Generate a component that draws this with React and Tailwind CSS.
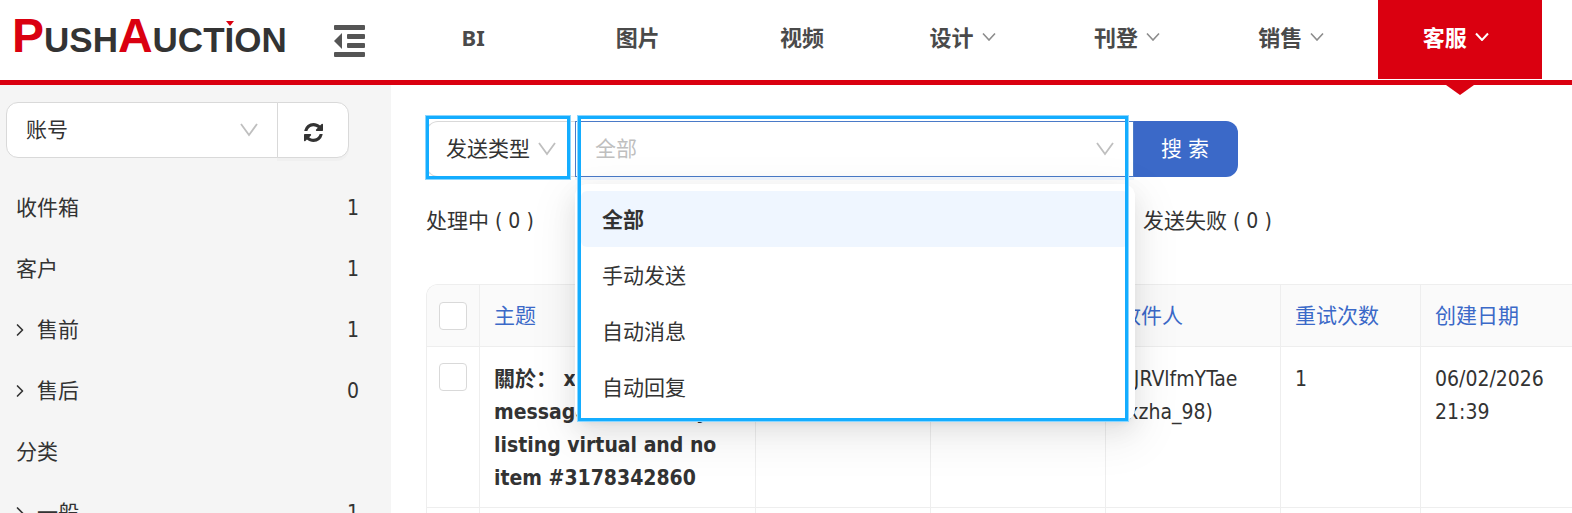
import React, { useState } from 'react';
import { ChevronRight } from 'lucide-react';

const navItems = [
  { label: 'BI' },
  { label: '图片' },
  { label: '视频' },
  { label: '设计', menu: true },
  { label: '刊登', menu: true },
  { label: '销售', menu: true },
  { label: '客服', menu: true, active: true },
];

const folders = [
  { label: '收件箱', count: 1 },
  { label: '客户', count: 1 },
  { label: '售前', count: 1, expandable: true },
  { label: '售后', count: 0, expandable: true },
  { label: '分类' },
  { label: '一般', count: 1, expandable: true },
];

const sendTypes = ['全部', '手动发送', '自动消息', '自动回复'];

const Caret = ({ className }) => (
  <svg viewBox="0 0 18 14" className={className} fill="none" stroke="currentColor" strokeWidth="1.8" aria-hidden="true">
    <path d="M1 1 L9 12 L17 1" />
  </svg>
);

const RefreshIcon = () => (
  <svg viewBox="0 0 1536 1536" className="mt-1 h-[19px] w-[19px]" fill="currentColor" aria-hidden="true">
    <path d="M1511 928q0 5 -1 7q-64 268 -268 434.5t-478 166.5q-146 0 -282.5 -55t-243.5 -157l-129 129q-19 19 -45 19t-45 -19t-19 -45v-448q0 -26 19 -45t45 -19h448q26 0 45 19t19 45t-19 45l-137 137q71 66 161 102t187 36q134 0 250 -65t186 -179q11 -17 53 -117q8 -23 30 -23h192q13 0 22.5 9.5t9.5 22.5zM1536 128v448q0 26 -19 45t-45 19h-448q-26 0 -45 -19t-19 -45t19 -45l138 -138q-148 -137 -349 -137q-134 0 -250 65t-186 179q-11 17 -53 117q-8 23 -30 23h-199q-13 0 -22.5 -9.5t-9.5 -22.5v-7q65 -268 270 -434.5t480 -166.5q146 0 284 55.5t245 156.5l130 -129q19 -19 45 -19t45 19t19 45z" />
  </svg>
);

const Logo = () => (
  <a href="#" className="flex items-baseline font-['Liberation_Sans',sans-serif] font-bold text-[35px] leading-[72px] text-[#333]">
    <span className="text-[48px] text-[#da0010]">P</span>
    USH
    <span className="text-[48px] text-[#da0010]">A</span>
    UCT
    <span className="relative">
      I
      <svg viewBox="0 0 8 5" className="absolute left-px top-[17px] w-2 h-[5px]" aria-hidden="true">
        <path d="M0 0 H8 L4 5 Z" fill="#da0010" />
      </svg>
    </span>
    ON
  </a>
);

const Header = () => (
  <header className="flex h-[85px] border-b-5 border-[#da0010] bg-white">
    <div className="flex w-[391px] shrink-0 items-start pl-3">
      <div className="w-[322px]">
        <Logo />
      </div>
      <button aria-label="收起菜单" className="mt-[25px]">
        <svg viewBox="0 0 31 32" className="h-8 w-[31px]" fill="#555">
          <rect width="31" height="5" rx="1" />
          <rect x="13" y="9" width="18" height="5" rx="1" />
          <rect x="13" y="18" width="18" height="5" rx="1" />
          <rect y="27" width="31" height="5" rx="1" />
          <path d="M0 16 L8 8 V24 Z" />
        </svg>
      </button>
    </div>
    <nav className="mr-[30px] grid flex-1 grid-cols-7 font-['Noto_Sans','Noto_Sans_CJK_SC',sans-serif] text-[22px] font-bold text-[#4a4a4a]">
      {navItems.map((item) => (
        <a
          key={item.label}
          href="#"
          className={`relative flex h-[79px] items-center justify-center gap-2 pb-1.5 ${item.active ? 'bg-[#da0010] text-white' : ''}`}
        >
          {item.label}
          {item.menu && (
            <svg
              viewBox="0 0 14 9"
              className={`mr-2 h-[9px] w-3.5 ${item.active ? 'text-white' : 'text-[#8c8c8c]'}`}
              fill="none"
              stroke="currentColor"
              strokeWidth={item.active ? 2 : 1.6}
              aria-hidden="true"
            >
              <path d="M1 1.5 L7 8 L13 1.5" />
            </svg>
          )}
          {item.active && (
            <svg viewBox="0 0 28 10" className="absolute -bottom-4 left-1/2 h-2.5 w-7 -translate-x-1/2" aria-hidden="true">
              <path d="M0 0 H28 L14 10 Z" fill="#da0010" />
            </svg>
          )}
        </a>
      ))}
    </nav>
  </header>
);

const Sidebar = () => (
  <aside className="w-[391px] shrink-0 bg-[#f5f5f5] pl-1.5 pt-[17px]">
    <div className="mr-[42px] flex h-14">
      <div className="relative flex-1">
        <select aria-label="账号" className="h-full w-full appearance-none rounded-l-xl border border-[#d9d9d9] bg-white pl-[19px]">
          <option>账号</option>
        </select>
        <Caret className="pointer-events-none absolute right-5 top-[21px] h-3.5 w-[18px] text-[#bfbfbf]" />
      </div>
      <button
        aria-label="刷新"
        className="-ml-px flex w-[72px] items-center justify-center rounded-r-xl border border-[#d9d9d9] bg-white shadow-[0_3px_0_rgba(0,0,0,0.02)]"
      >
        <RefreshIcon />
      </button>
    </div>
    <ul className="mr-8 mt-[19px] pl-2.5">
      {folders.map((folder) => (
        <li key={folder.label}>
          <a href="#" className="flex h-[61px] items-center">
            {folder.expandable && <ChevronRight className="-ml-1.5 mr-[7px] h-5 w-5" strokeWidth={2} />}
            <span className="flex-1">{folder.label}</span>
            <span>{folder.count}</span>
          </a>
        </li>
      ))}
    </ul>
  </aside>
);

const SearchBar = () => {
  const [selected, setSelected] = useState('全部');

  return (
    <div className="relative flex h-14">
      <div className="relative w-[149px]">
        <select aria-label="搜索条件" className="h-full w-full appearance-none rounded-l-xl border border-r-0 border-[#d9d9d9] bg-white pl-[19px]">
          <option>发送类型</option>
        </select>
        <Caret className="pointer-events-none absolute right-[19px] top-[21px] h-3.5 w-[18px] text-[#bfbfbf]" />
      </div>

      <div className="relative w-[559px]">
        <input
          type="text"
          role="combobox"
          aria-label="发送类型"
          aria-expanded="true"
          aria-controls="send-types"
          placeholder="全部"
          readOnly
          className="h-full w-full border border-[#4a7ac8] bg-white pl-[19px] placeholder-[#bfbfbf] shadow-[0_3px_0_rgba(5,95,255,0.06)] outline-none"
        />
        <Caret className="absolute right-5 top-[21px] h-3.5 w-[18px] text-[#bfbfbf]" />
        <ul
          id="send-types"
          role="listbox"
          className="absolute left-0 top-[63px] z-10 w-[560px] rounded-xl bg-white px-1.5 pb-1.5 pt-[7px] shadow-[0_9px_24px_0_rgba(0,0,0,0.08),0_5px_9px_-6px_rgba(0,0,0,0.12),0_14px_42px_12px_rgba(0,0,0,0.05)]"
        >
          {sendTypes.map((type) => (
            <li
              key={type}
              role="option"
              aria-selected={type === selected}
              onClick={() => setSelected(type)}
              className={`flex h-14 items-center rounded-md pl-[21px] pt-0.5 ${type === selected ? 'bg-[#eff6ff] font-bold' : ''}`}
            >
              {type}
            </li>
          ))}
        </ul>
        <div className="pointer-events-none absolute -top-[5px] left-[3px] z-20 h-[305px] w-[550px] border-3 border-[#14adff] shadow-[0_0_0_1px_#8ad6ff]" />
      </div>

      <button className="w-[104px] rounded-r-xl bg-[#3b69c8] pr-0.5 text-white">搜 索</button>
      <div className="pointer-events-none absolute left-0 -top-[5px] z-20 h-[63px] w-[144px] border-3 border-[#14adff] shadow-[0_0_0_1px_#8ad6ff]" />
    </div>
  );
};

const MessageTable = () => (
  <div className="overflow-hidden rounded-tl-xl border-l border-t border-[#eee]">
    <table className="w-full table-fixed border-separate border-spacing-0 text-left [&_td]:border-b [&_td]:border-r [&_td]:border-[#eee] [&_td]:px-3.5 [&_td]:pb-3 [&_td]:pt-4 [&_th]:border-b [&_th]:border-r [&_th]:border-[#eee] [&_th]:px-3.5 [&_th]:font-normal [&_tr>*:last-child]:border-r-0">
      <colgroup>
        <col className="w-[53px]" />
        <col className="w-[276px]" />
        <col className="w-[175px]" />
        <col className="w-[175px]" />
        <col className="w-[175px]" />
        <col className="w-[140px]" />
        <col />
      </colgroup>
      <thead className="h-[62px] bg-[#fafafa] text-[#3b69c8]">
        <tr>
          <th className="px-3!">
            <input type="checkbox" aria-label="全选" className="block h-7 w-7 appearance-none rounded-sm border border-[#d9d9d9] bg-white" />
          </th>
          <th>主题</th>
          <th></th>
          <th></th>
          <th>收件人</th>
          <th>重试次数</th>
          <th>创建日期</th>
        </tr>
      </thead>
      <tbody className="align-top leading-[33px]">
        <tr>
          <td className="px-3!">
            <input type="checkbox" aria-label="选择邮件" className="block h-7 w-7 appearance-none rounded-sm border border-[#d9d9d9] bg-white" />
          </td>
          <td className="font-bold">
            關於： x
            <br />
            message about only
            <br />
            listing virtual and no
            <br />
            item #3178342860
          </td>
          <td></td>
          <td></td>
          <td>
            UJRVlfmYTae
            <br />
            (xzha_98)
          </td>
          <td>1</td>
          <td>
            06/02/2026
            <br />
            21:39
          </td>
        </tr>
        <tr>
          <td className="h-14"></td>
          <td></td>
          <td></td>
          <td></td>
          <td></td>
          <td></td>
          <td></td>
        </tr>
      </tbody>
    </table>
  </div>
);

export default function App() {
  return (
    <div className="flex h-screen flex-col overflow-hidden bg-white font-['DejaVu_Sans_Condensed','Noto_Sans_CJK_SC',sans-serif] text-[21px] leading-8 text-[#333]">
      <Header />
      <div className="flex min-h-0 flex-1">
        <Sidebar />
        <main className="min-w-0 flex-1 overflow-hidden pl-[35px] pt-9">
          <SearchBar />
          <div className="mb-[47px] mt-7 grid grid-cols-[717px_1fr]">
            <a href="#">处理中 ( 0 )</a>
            <a href="#">发送失败 ( 0 )</a>
          </div>
          <MessageTable />
        </main>
      </div>
    </div>
  );
}
